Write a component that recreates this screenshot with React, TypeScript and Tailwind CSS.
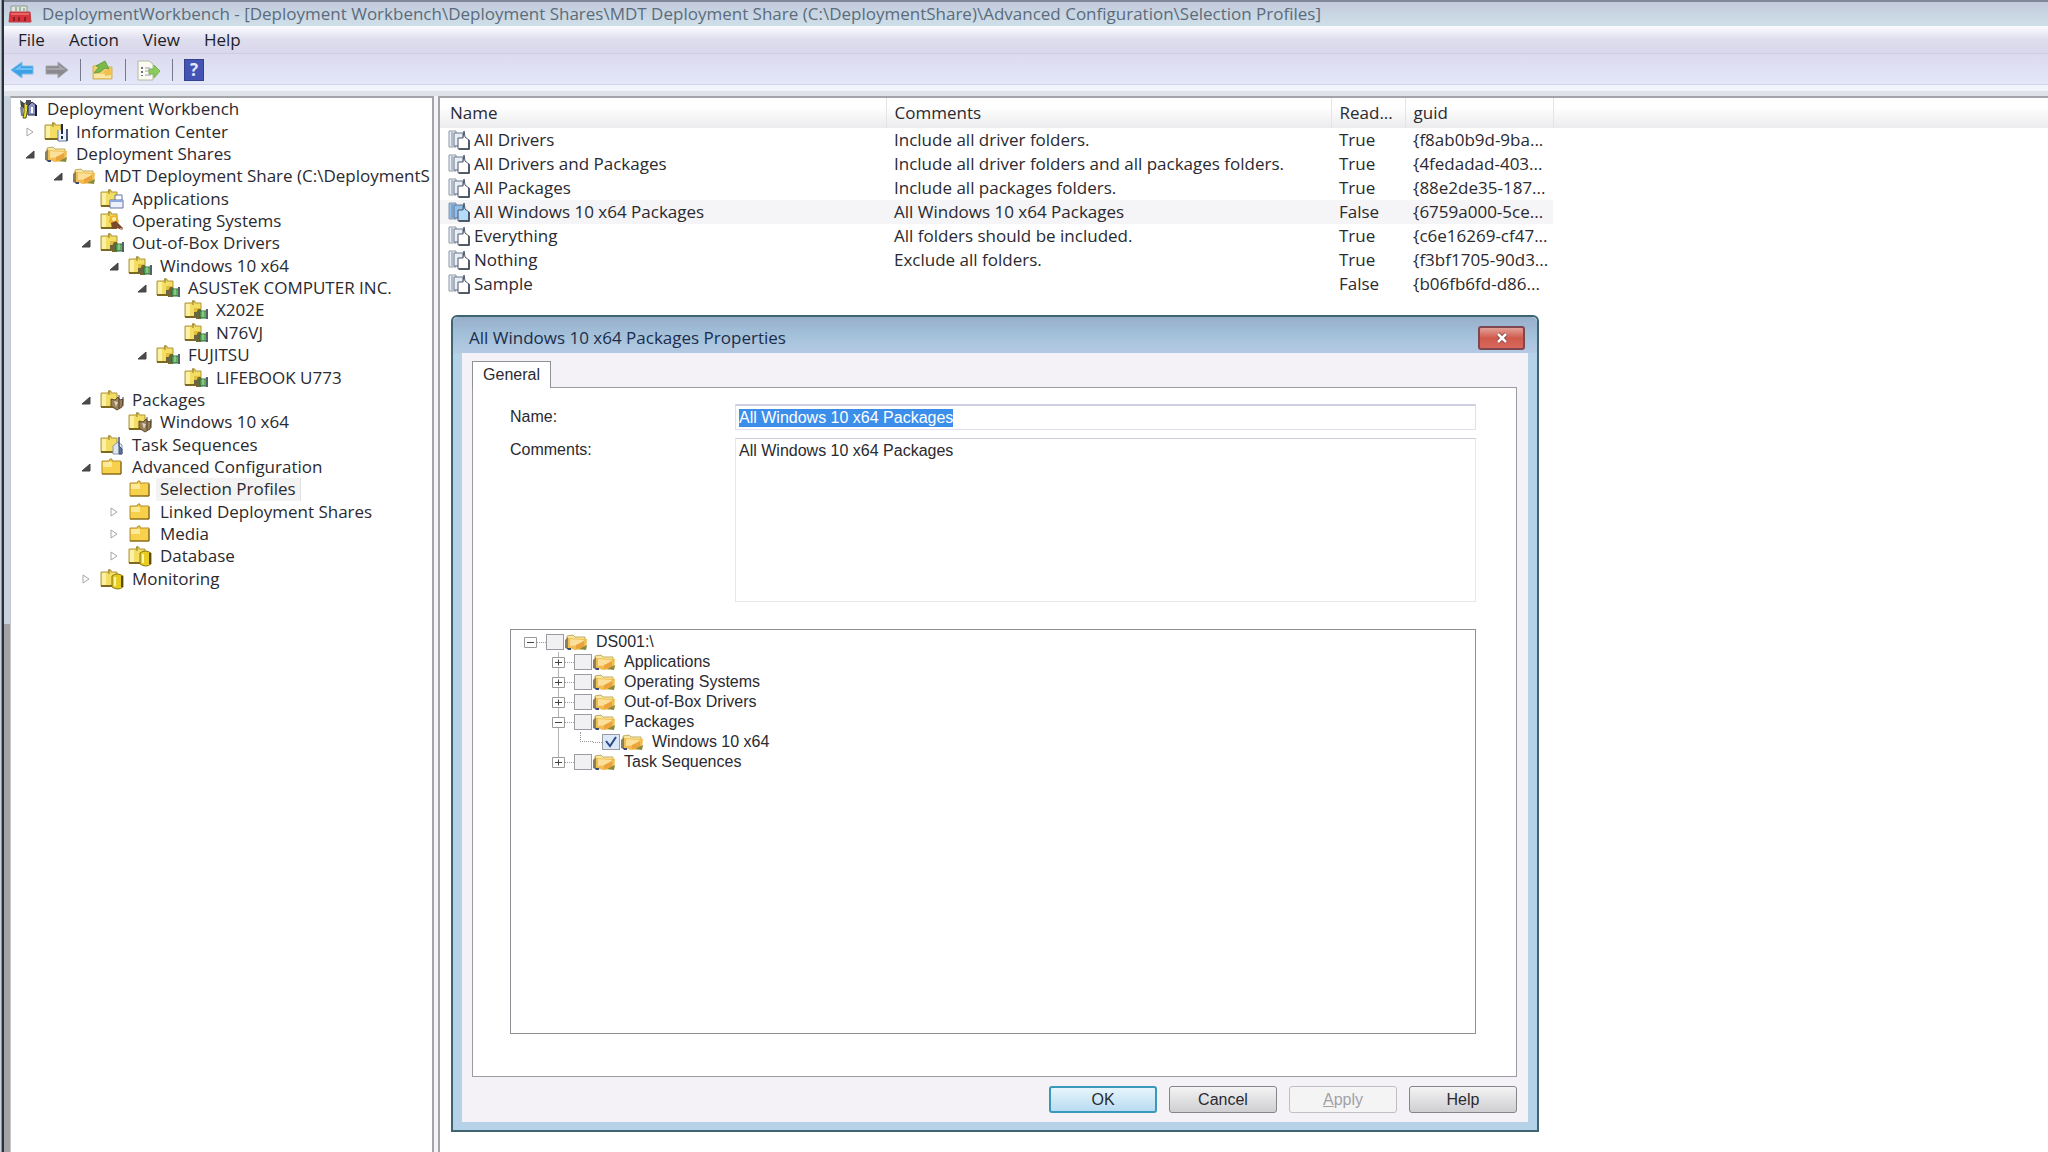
import { useEffect, useRef, type ReactNode } from 'react';

type Kind = 'root' | 'info' | 'share' | 'apps' | 'os' | 'driver' | 'package' | 'task' | 'folder' | 'database';

interface TreeNode {
  label: string;
  depth: number;
  kind: Kind;
  state?: 'open' | 'closed';
  selected?: boolean;
}

const nodes: TreeNode[] = [
  { label: 'Deployment Workbench', depth: 0, kind: 'root' },
  { label: 'Information Center', depth: 1, kind: 'info', state: 'closed' },
  { label: 'Deployment Shares', depth: 1, kind: 'share', state: 'open' },
  { label: 'MDT Deployment Share (C:\\DeploymentS', depth: 2, kind: 'share', state: 'open' },
  { label: 'Applications', depth: 3, kind: 'apps' },
  { label: 'Operating Systems', depth: 3, kind: 'os' },
  { label: 'Out-of-Box Drivers', depth: 3, kind: 'driver', state: 'open' },
  { label: 'Windows 10 x64', depth: 4, kind: 'driver', state: 'open' },
  { label: 'ASUSTeK COMPUTER INC.', depth: 5, kind: 'driver', state: 'open' },
  { label: 'X202E', depth: 6, kind: 'driver' },
  { label: 'N76VJ', depth: 6, kind: 'driver' },
  { label: 'FUJITSU', depth: 5, kind: 'driver', state: 'open' },
  { label: 'LIFEBOOK U773', depth: 6, kind: 'driver' },
  { label: 'Packages', depth: 3, kind: 'package', state: 'open' },
  { label: 'Windows 10 x64', depth: 4, kind: 'package' },
  { label: 'Task Sequences', depth: 3, kind: 'task' },
  { label: 'Advanced Configuration', depth: 3, kind: 'folder', state: 'open' },
  { label: 'Selection Profiles', depth: 4, kind: 'folder', selected: true },
  { label: 'Linked Deployment Shares', depth: 4, kind: 'folder', state: 'closed' },
  { label: 'Media', depth: 4, kind: 'folder', state: 'closed' },
  { label: 'Database', depth: 4, kind: 'database', state: 'closed' },
  { label: 'Monitoring', depth: 3, kind: 'database', state: 'closed' },
];

const indents = ['pl-0', 'pl-[5px]', 'pl-[33px]', 'pl-[61px]', 'pl-[89px]', 'pl-[117px]', 'pl-[145px]'];

const profiles = [
  { name: 'All Drivers', comments: 'Include all driver folders.', readOnly: 'True', guid: '{f8ab0b9d-9ba...' },
  { name: 'All Drivers and Packages', comments: 'Include all driver folders and all packages folders.', readOnly: 'True', guid: '{4fedadad-403...' },
  { name: 'All Packages', comments: 'Include all packages folders.', readOnly: 'True', guid: '{88e2de35-187...' },
  { name: 'All Windows 10 x64 Packages', comments: 'All Windows 10 x64 Packages', readOnly: 'False', guid: '{6759a000-5ce...' },
  { name: 'Everything', comments: 'All folders should be included.', readOnly: 'True', guid: '{c6e16269-cf47...' },
  { name: 'Nothing', comments: 'Exclude all folders.', readOnly: 'True', guid: '{f3bf1705-90d3...' },
  { name: 'Sample', comments: '', readOnly: 'False', guid: '{b06fb6fd-d86...' },
];

const shareFolders = [
  { label: 'DS001:\\', depth: 0, sign: '-' },
  { label: 'Applications', depth: 1, sign: '+' },
  { label: 'Operating Systems', depth: 1, sign: '+' },
  { label: 'Out-of-Box Drivers', depth: 1, sign: '+' },
  { label: 'Packages', depth: 1, sign: '-' },
  { label: 'Windows 10 x64', depth: 2, sign: '', checked: true },
  { label: 'Task Sequences', depth: 1, sign: '+', last: true },
];

const folderIndents = ['pl-[13px]', 'pl-[41px]', 'pl-[69px]'];

function SmallFolder() {
  return (
    <>
      <path d="M1 4h7l1-2h2v2h6v14H1z" fill="#f3dd62" stroke="#b0963a" />
      <path d="M2 5h4v12H2z" fill="#faf0a6" />
      <path d="M9 1v5" stroke="#8a742a" />
      <path d="M1 18h16" stroke="#7d6820" strokeWidth="2" />
    </>
  );
}

function OpenFolder() {
  return (
    <>
      <path d="M3 5l6-1 2 2h10v4H3z" fill="#f6e9a4" stroke="#c4ab62" />
      <path d="M1 17V9l3-3v12z" fill="#8b8058" />
      <path d="M4 7l19 1-1 10-11 1-7-2z" fill="#f2bd50" />
      <path d="M6 8l14 1-4 5-10 1z" fill="#fce09a" />
      <path d="M12 14l8-4v6l-8 2z" fill="#eba33c" />
      <path d="M1 15l3 4h3v-2H3z" fill="#3c4a78" />
      <path d="M15 18l7 1 1-5z" fill="#8a8a3a" />
    </>
  );
}

function NodeIcon({ kind }: { kind: Kind }) {
  let art: ReactNode;
  switch (kind) {
    case 'root':
      art = (
        <>
          <path d="M1 2l4 3 1 6-4-2z" fill="#3d4652" />
          <path d="M1 9h3v9H2z" fill="#7a8290" />
          <path d="M5 6l4-3v7l-2 10H4l1-6z" fill="#e3dc2a" stroke="#55521a" />
          <path d="M7 2h5v5H7z" fill="#4a4f57" />
          <path d="M9 8l4-4 4 3v10H9z" fill="#8f95c4" stroke="#23264a" />
          <path d="M12 9h2v6h-2z" fill="#fff" />
          <path d="M17 7v11" stroke="#1b1d38" strokeWidth="2" />
        </>
      );
      break;
    case 'share':
      art = <OpenFolder />;
      break;
    case 'info':
      art = (
        <>
          <SmallFolder />
          <path d="M14 9v11h9V10" fill="#eef2fb" stroke="#6474a0" />
          <path d="M18 3v10M18 15v3" stroke="#1f2b55" strokeWidth="2" />
          <path d="M23 8v12" stroke="#4b5a80" strokeWidth="2" />
        </>
      );
      break;
    case 'apps':
      art = (
        <>
          <SmallFolder />
          <path d="M15 7h7v7h-7z" fill="#fff" stroke="#5f79ad" />
          <path d="M10 12h13v8H10z" fill="#eef0fc" stroke="#6472a0" />
          <path d="M10 12h13v2H10z" fill="#8fa6dc" />
        </>
      );
      break;
    case 'os':
      art = (
        <>
          <SmallFolder />
          <path d="M10 6l7-1 2 7-6 4-4-4z" fill="#f0b530" />
          <path d="M11 13l5-2 7 7-1 2-5-2-5 1z" fill="#7b4a2a" />
          <circle cx="14" cy="9" r="2" fill="#fff0b0" />
          <circle cx="21" cy="19" r="1" fill="#d6b7a2" />
        </>
      );
      break;
    case 'driver':
      art = (
        <>
          <SmallFolder />
          <path d="M10 9h6v5h-6z" fill="#e0c040" />
          <path d="M14 10h3v10h-5v-6z" fill="#77682a" />
          <path d="M16 12h7v7h-7z" fill="#5fae5c" stroke="#2c6b38" />
          <path d="M10 13h5v5h-5z" fill="#6b6440" />
          <path d="M19 12v6" stroke="#b5e0b0" />
          <path d="M23 10v10" stroke="#54606a" strokeWidth="2" />
        </>
      );
      break;
    case 'package':
      art = (
        <>
          <SmallFolder />
          <path d="M11 10l4 1 3-3 2 3 3-1-1 8-5 3-6-4z" fill="#9a8056" stroke="#5e4a2c" />
          <path d="M14 12l4 1-2 5z" fill="#dcd3c0" />
          <path d="M19 6v13M23 8v9" stroke="#4c4134" />
        </>
      );
      break;
    case 'task':
      art = (
        <>
          <SmallFolder />
          <path d="M13 12l5-4 4 3v9h-9z" fill="#dfe6f2" stroke="#8c98b4" />
          <path d="M19 3v9l3 3v5h-3z" fill="#5f7399" stroke="#41527a" />
        </>
      );
      break;
    case 'database':
      art = (
        <>
          <SmallFolder />
          <path d="M12 8q5-4 11 0v11q-5 4-11 0z" fill="#e8cc22" stroke="#8a7410" />
          <path d="M15 9v9" stroke="#fff7a8" strokeWidth="2" />
          <path d="M22 8v11" stroke="#5c4c08" strokeWidth="2" />
        </>
      );
      break;
    default:
      art = (
        <>
          <path d="M2 5h7l1-2h2v2h9v13H2z" fill="#f7d04c" stroke="#b48d2a" />
          <path d="M3 6h9v5H3z" fill="#fde998" />
          <path d="M2 18h19V6" stroke="#7b5f14" fill="none" />
        </>
      );
  }
  return (
    <svg
      viewBox={kind === 'root' ? '0 0 20 22' : '0 0 24 22'}
      className={`h-[22px] shrink-0 ${kind === 'root' ? 'w-5' : 'w-6'}`}
      aria-hidden="true"
    >
      {art}
    </svg>
  );
}

function Expander({ state }: { state?: 'open' | 'closed' }) {
  return (
    <svg viewBox="0 0 12 12" className="w-3 h-3 mr-2 shrink-0" aria-hidden="true">
      {state === 'open' && <path d="M10 3v7H2z" fill="#4a4a4a" stroke="#444" />}
      {state === 'closed' && <path d="M3 2v8l6-4z" fill="#fff" stroke="#a6a6a6" />}
    </svg>
  );
}

function ProfileIcon({ active }: { active: boolean }) {
  const fill = active ? '#8fc1f0' : '#e9eef6';
  return (
    <svg viewBox="0 0 22 22" className="w-[22px] h-[22px] mr-1 shrink-0" aria-hidden="true">
      <path d="M1 2h7v16H1z" fill={fill} stroke="#8c98a8" />
      <path d="M4 3v14" stroke="#7b8aa0" />
      <path d="M6 4h9v13H6z" fill={fill} stroke="#66748a" />
      <path d="M10 9h5l1-7 1 6 4 3v9H10z" fill={active ? '#b5dbfb' : '#fff'} stroke="#4a5566" />
      <path d="M11 20h10V11" fill="none" stroke="#38424f" strokeWidth="1.5" />
    </svg>
  );
}

function TitleBar() {
  return (
    <header className="flex items-center h-[26px] pl-1 gap-[10px] border-t-2 border-[#7f8799] bg-gradient-to-b from-[#c2cadb] to-[#cfe0ea] text-[#5c6b7b]">
      <svg viewBox="0 0 24 22" className="w-6 h-[22px]" aria-hidden="true">
        <path d="M3 9V3h16v6" fill="#e2e4de" stroke="#8c9a94" />
        <path d="M8 4v4M12 4v4M16 5v3" stroke="#5f8f6c" />
        <path d="M2 9h20l1 10H1z" fill="#d6333b" stroke="#b84048" />
        <path d="M3 10h18v2H3z" fill="#e8656a" />
        <path d="M6 14v4M11 14v4M17 14v4" stroke="#8e1f26" strokeWidth="2" />
      </svg>
      <h1 className="leading-6 whitespace-nowrap">
        DeploymentWorkbench - [Deployment Workbench\Deployment Shares\MDT Deployment Share (C:\DeploymentShare)\Advanced Configuration\Selection Profiles]
      </h1>
    </header>
  );
}

function MenuBar() {
  return (
    <nav className="flex items-center h-7 pl-[14px] gap-6 bg-gradient-to-b from-[#fcfcff] via-[#dfdeee] to-[#d9d7ea] border-b border-[#cfcde2]">
      {['File', 'Action', 'View', 'Help'].map(item => (
        <button key={item} className="text-[#1e1e28]">
          {item}
        </button>
      ))}
    </nav>
  );
}

function Toolbar() {
  const separator = <span className="w-px h-[22px] bg-[#77798c]" />;
  return (
    <div className="flex items-center h-[31px] pt-[2px] pl-[6px] gap-[11px] bg-gradient-to-b from-[#dcdaee] to-[#e3e7f8] border-b border-[#d2d3e8]">
      <button aria-label="Back">
        <svg viewBox="0 0 24 22" className="w-6 h-[22px]">
          <path d="M1 11l11-8v4h11v8H12v4z" fill="#3ba0e6" stroke="#7cbce6" />
          <path d="M4 11l7-5v3h11v2z" fill="#6cc0f5" />
        </svg>
      </button>
      <button aria-label="Forward">
        <svg viewBox="0 0 24 22" className="w-6 h-[22px]">
          <path d="M23 11L13 3v4H1v8h12v4z" fill="#89898f" stroke="#a6a6ae" />
          <path d="M21 11l-7-5v3H2v2z" fill="#a5a5aa" />
        </svg>
      </button>
      {separator}
      <button aria-label="Up one level">
        <svg viewBox="0 0 22 22" className="w-[22px] h-[22px]">
          <path d="M1 7l6-1 2 2h11v12H1z" fill="#f0cf6c" stroke="#d2b25a" />
          <path d="M2 15h17v4H2z" fill="#f8e7a5" />
          <path d="M2 14l5-6-3-1 9-5 4 8-4-1-5 4z" fill="#7cb84a" stroke="#69a244" />
          <path d="M12 12l7-2v6l-6 1z" fill="#f4c04c" />
        </svg>
      </button>
      {separator}
      <button aria-label="Export list">
        <svg viewBox="0 0 24 22" className="w-6 h-[22px]">
          <path d="M1 2h11l4 3v16H1z" fill="#fbfbf2" stroke="#b4b8a2" />
          <path d="M5 8v9" stroke="#6d6f86" strokeWidth="2" strokeDasharray="2 2" />
          <path d="M8 9h5M8 12h4M8 16h6" stroke="#9a9cb4" />
          <path d="M12 10h5V6l6 6-6 7v-4h-5z" fill="#8ccc5c" stroke="#7cb054" />
        </svg>
      </button>
      {separator}
      <button aria-label="Help" className="w-5 h-[22px] bg-[#4553b4] border border-[#34418e] text-[#e6e8fa] leading-5 font-bold">
        ?
      </button>
    </div>
  );
}

function ConsoleTree() {
  return (
    <aside className="w-[424px] shrink-0 bg-white border-2 border-[#a3a4aa] border-l border-l-[#c4c6cc] border-b-0 overflow-hidden">
      <ul className="grid auto-rows-fr h-[492px] pl-2">
        {nodes.map((node, i) => (
          <li key={i} className={`flex items-center whitespace-nowrap min-h-0 ${indents[node.depth]}`}>
            {node.depth > 0 && <Expander state={node.state} />}
            <NodeIcon kind={node.kind} />
            <span
              className={`h-full flex items-center ml-1 pl-1 ${
                node.selected ? 'pr-1 bg-[#f3f3f3] border-r border-[#e0e0e0]' : ''
              }`}
            >
              {node.label}
            </span>
          </li>
        ))}
      </ul>
    </aside>
  );
}

function ProfileList() {
  return (
    <main className="flex-1 bg-white border-t-2 border-l-2 border-[#a3a4aa]">
      <table className="table-fixed border-collapse w-full text-left whitespace-nowrap">
        <colgroup>
          <col className="w-[446px]" />
          <col className="w-[445px]" />
          <col className="w-[74px]" />
          <col className="w-[148px]" />
          <col />
        </colgroup>
        <thead>
          <tr className="h-[30px] bg-gradient-to-b from-white from-30% to-[#ebebed]">
            <th className="font-normal pl-[10px] border-r border-[#e4e4e4]">Name</th>
            <th className="font-normal pl-2 border-r border-[#e4e4e4]">Comments</th>
            <th className="font-normal pl-2 border-r border-[#e4e4e4]">Read...</th>
            <th className="font-normal pl-2 border-r border-[#e4e4e4]">guid</th>
            <td />
          </tr>
        </thead>
        <tbody>
          {profiles.map(p => {
            const active = p.name === 'All Windows 10 x64 Packages';
            const cell = `pl-2 ${active ? 'bg-[#f5f4f6]' : ''}`;
            return (
              <tr key={p.name} className="h-6">
                <td className={cell}>
                  <div className="flex items-center h-6">
                    <ProfileIcon active={active} />
                    {p.name}
                  </div>
                </td>
                <td className={cell}>{p.comments}</td>
                <td className={cell}>{p.readOnly}</td>
                <td className={cell}>{p.guid}</td>
                <td />
              </tr>
            );
          })}
        </tbody>
      </table>
    </main>
  );
}

function FolderPicker() {
  return (
    <ul className="h-[405px] pt-[2px] bg-white border border-[#8f8f96]">
      {shareFolders.map(f => (
        <li key={f.label} className={`relative flex items-center h-5 ${folderIndents[f.depth]}`}>
          {f.depth > 0 && (
            <span className={`absolute left-[47px] top-0 w-px bg-[#b4b4b4] ${f.last ? 'h-[10px]' : 'h-5'}`} />
          )}
          {f.sign ? (
            <svg viewBox="0 0 13 13" className="relative w-[13px] h-[13px]" aria-hidden="true">
              <path d="M.5 1.5h12v10H.5z" fill="#fff" stroke="#9a9a9a" />
              <path d="M3 6.5h7" stroke="#444" />
              {f.sign === '+' && <path d="M6.5 3.5v6" stroke="#444" />}
            </svg>
          ) : (
            <span className="w-[13px] h-[10px] self-start border-l border-b border-dotted border-[#9a9a9a]" />
          )}
          <span className="w-[9px] border-t border-dotted border-[#9a9a9a]" />
          <label className="flex items-center">
            <input
              type="checkbox"
              defaultChecked={f.checked}
              className="appearance-none w-[18px] h-4 bg-[#f1f1f3] border border-[#9a9ca2] checked:bg-[#dbe8f8]"
            />
            {f.checked && (
              <svg viewBox="0 0 18 16" className="w-[18px] h-4 -ml-[18px] pointer-events-none" aria-hidden="true">
                <path d="M4 7l4 5 6-9" fill="none" stroke="#2c4a86" strokeWidth="2" />
              </svg>
            )}
            <svg viewBox="0 2 24 19" className="w-6 h-[19px]" aria-hidden="true">
              <OpenFolder />
            </svg>
            <span className="ml-2">{f.label}</span>
          </label>
        </li>
      ))}
    </ul>
  );
}

function PropertiesDialog() {
  const nameRef = useRef<HTMLInputElement>(null);

  useEffect(() => {
    nameRef.current?.focus();
    nameRef.current?.select();
  }, []);

  const button = 'w-[108px] h-[27px] leading-[23px] rounded-[3px]';
  return (
    <section
      role="dialog"
      aria-label="All Windows 10 x64 Packages Properties"
      className="absolute left-[451px] top-[315px] w-[1088px] rounded-t-md border-2 border-[#3f6670] bg-[#b5d2e8]"
    >
      <div className="flex items-center justify-between h-9 pt-[6px] pl-4 pr-3 rounded-t-md bg-gradient-to-b from-[#98aeca] via-[#a3c1da] to-[#b5cae2]">
        <h2 className="text-[#1c2d4c]">All Windows 10 x64 Packages Properties</h2>
        <button
          aria-label="Close"
          className="flex items-center justify-center w-[47px] h-6 rounded-[3px] border-2 border-[#7d4650] bg-gradient-to-b from-[#e2a098] via-[#cf5a4c] to-[#d9685a]"
        >
          <svg viewBox="0 0 14 12" className="w-[14px] h-3">
            <path d="M3 2l8 8M11 2l-8 8" stroke="#7a3a40" strokeWidth="4" />
            <path d="M3 2l8 8M11 2l-8 8" stroke="#fff" strokeWidth="2.5" />
          </svg>
        </button>
      </div>

      <div className="mx-[9px] mb-2 bg-[#f4f2f6] pt-[7px] pl-[10px] pr-[11px] pb-[9px] border-t border-[#eef4fd] font-['Liberation_Sans',sans-serif] text-base">
        <div role="tablist">
          <button role="tab" aria-selected="true" className="relative block w-[79px] h-[27px] -mb-px border border-b-0 border-[#8f8f96] bg-white">
            General
          </button>
        </div>

        <div className="border border-[#9a9aa0] bg-white pt-4 pl-[37px] pr-10 pb-[42px]">
          <div className="flex">
            <label htmlFor="name" className="w-[225px] shrink-0 leading-[26px]">
              Name:
            </label>
            <input
              id="name"
              ref={nameRef}
              type="text"
              defaultValue="All Windows 10 x64 Packages"
              className="flex-1 h-[26px] px-[3px] bg-white border border-[#e0e0ee] border-t-2 border-t-[#cfcfe2] outline-none selection:bg-[#3b8eea] selection:text-white"
            />
          </div>
          <div className="flex mt-2">
            <label htmlFor="comments" className="w-[225px] shrink-0 leading-6">
              Comments:
            </label>
            <textarea
              id="comments"
              defaultValue="All Windows 10 x64 Packages"
              className="flex-1 h-[164px] px-[3px] leading-6 bg-white border border-[#e6e6ec] border-t-[#cdcdd6] outline-none resize-none"
            />
          </div>
          <div className="mt-[27px]">
            <FolderPicker />
          </div>
        </div>

        <div className="flex justify-end gap-3 pt-[9px]">
          <button className={`${button} border-2 border-[#3a98b8] bg-gradient-to-b from-[#e6f5fb] to-[#b9dcf2]`}>OK</button>
          <button className={`${button} border border-[#85858a] bg-gradient-to-b from-[#f4f4f4] to-[#cfcfd2]`}>Cancel</button>
          <button disabled className={`${button} border border-[#c0c0c4] bg-[#f4f4f5] text-[#a2a2a6]`}>
            <u>A</u>pply
          </button>
          <button className={`${button} border border-[#85858a] bg-gradient-to-b from-[#f4f4f4] to-[#cfcfd2]`}>Help</button>
        </div>
      </div>
    </section>
  );
}

export default function App() {
  return (
    <div className="relative min-h-screen flex bg-[#f4f3f8] font-['Open_Sans','Noto_Sans',sans-serif] text-[17px] leading-6 text-[#2a2a30]">
      {/* Window edge */}
      <div className="w-1 shrink-0 border-l border-[#c9d2dc] border-r-2 border-r-[#2a3038] bg-[#8a94a2]" />
      <div className="flex-1 min-w-0 flex flex-col">
        <TitleBar />
        <MenuBar />
        <Toolbar />
        <div className="h-[6px] bg-[#f2f4fd]" />
        <div className="h-[5px] bg-[#dfe3e9]" />
        <div className="flex flex-1 gap-[4px]">
          <div className="flex">
            <div className="w-[6px] flex flex-col">
              <div className="h-[528px] bg-[#c6d3df]" />
              <div className="flex-1 bg-[#a3a3a6]" />
            </div>
            <ConsoleTree />
          </div>
          <ProfileList />
        </div>
      </div>
      <PropertiesDialog />
    </div>
  );
}
